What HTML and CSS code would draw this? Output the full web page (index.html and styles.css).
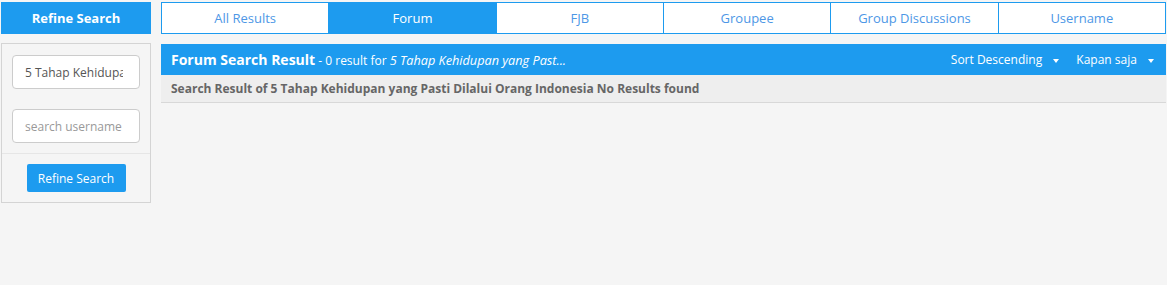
FILE: index.html
```html
<!DOCTYPE html>
<html lang="id">
<head>
    <meta charset="UTF-8">
    <meta name="viewport" content="width=device-width, initial-scale=1.0">
    <title>Search</title>
    <link rel="stylesheet" href="styles.css">
</head>
<body>
    <div class="page">
        <div class="sidebar">
            <div class="side-title">Refine Search</div>
            <form class="side-panel">
                <div class="side-fields">
                    <input class="field" type="text" value="5 Tahap Kehidupan yang Pasti Dilalui Orang Indonesia">
                    <input class="field" type="text" placeholder="search username">
                </div>
                <div class="side-actions">
                    <button class="btn" type="button">Refine Search</button>
                </div>
            </form>
        </div>

        <div class="main">
            <ul class="tabs">
                <li><a href="#">All Results</a></li>
                <li class="active"><a href="#">Forum</a></li>
                <li><a href="#">FJB</a></li>
                <li><a href="#">Groupee</a></li>
                <li><a href="#">Group Discussions</a></li>
                <li><a href="#">Username</a></li>
            </ul>

            <div class="result-head">
                <div class="result-title">
                    <b>Forum Search Result</b> - 0 result for <i>5 Tahap Kehidupan yang Past...</i>
                </div>
                <div class="result-tools">
                    <span class="drop">Sort Descending <span class="caret"></span></span>
                    <span class="drop">Kapan saja <span class="caret"></span></span>
                </div>
            </div>
            <div class="result-info">Search Result of 5 Tahap Kehidupan yang Pasti Dilalui Orang Indonesia No Results found</div>
        </div>
    </div>
</body>
</html>
```

FILE: styles.css
```css
body {
    margin: 0;
    background: #f5f5f5;
    font-family: "Open Sans", Arial, sans-serif;
    font-size: 12px;
    color: #555;
}
.page {
    display: flex;
    gap: 10px;
    padding: 2px 1px 0 1px;
}

/* ліва колонка */
.sidebar {
    width: 150px;
    flex-shrink: 0;
}
.side-title {
    height: 32px;
    line-height: 32px;
    background: #1d9bef;
    color: #fff;
    font-weight: bold;
    font-size: 13px;
    text-align: center;
}
.side-panel {
    margin: 9px 0 0 0;
    border: 1px solid #d4d4d4;
    background: #f5f5f5;
}
.side-fields {
    padding: 11px 10px 10px 10px;
    display: flex;
    flex-direction: column;
    gap: 20px;
    border-bottom: 1px solid #e6e6e6;
}
.field {
    box-sizing: border-box;
    width: 128px;
    height: 34px;
    border: 1px solid #ccc;
    border-radius: 4px;
    background: #fff;
    padding: 0 16px 0 12px;
    font-family: inherit;
    font-size: 12px;
    color: #555;
}
.field::placeholder {
    color: #999;
}
.side-actions {
    padding: 10px 0;
    text-align: center;
}
.btn {
    width: 99px;
    height: 28px;
    border: 0;
    border-radius: 2px;
    background: #1d9bef;
    color: #fff;
    font-family: inherit;
    font-size: 12px;
    padding: 0;
}

/* права колонка */
.main {
    flex: 1;
}
.tabs {
    list-style: none;
    margin: 0;
    padding: 0;
    display: flex;
    height: 32px;
    box-sizing: border-box;
    border: 1px solid #1d9bef;
    background: #fff;
}
.tabs li {
    flex: 1;
    border-left: 1px solid #1d9bef;
}
.tabs li:first-child {
    border-left: 0;
}
.tabs a {
    display: block;
    line-height: 30px;
    text-align: center;
    text-decoration: none;
    color: #4d97e6;
    font-size: 13px;
}
.tabs .active {
    background: #1d9bef;
}
.tabs .active a {
    color: #fff;
}
.result-head {
    margin-top: 10px;
    height: 31px;
    background: #1d9bef;
    color: #fff;
    display: flex;
    align-items: center;
    justify-content: space-between;
    padding: 0 12px 0 10px;
}
.result-title b {
    font-size: 14px;
}
.result-title i {
    font-size: 12.7px;
}
.result-tools {
    display: flex;
    gap: 17px;
}
.caret {
    display: inline-block;
    width: 0;
    height: 0;
    margin-left: 8px;
    vertical-align: middle;
    border-top: 4px solid #fff;
    border-left: 3px solid transparent;
    border-right: 3px solid transparent;
}
.result-info {
    height: 27px;
    line-height: 27px;
    background: #eee;
    border-bottom: 1px solid #d8d8d8;
    padding-left: 10px;
    font-weight: bold;
    color: #666;
}
```
